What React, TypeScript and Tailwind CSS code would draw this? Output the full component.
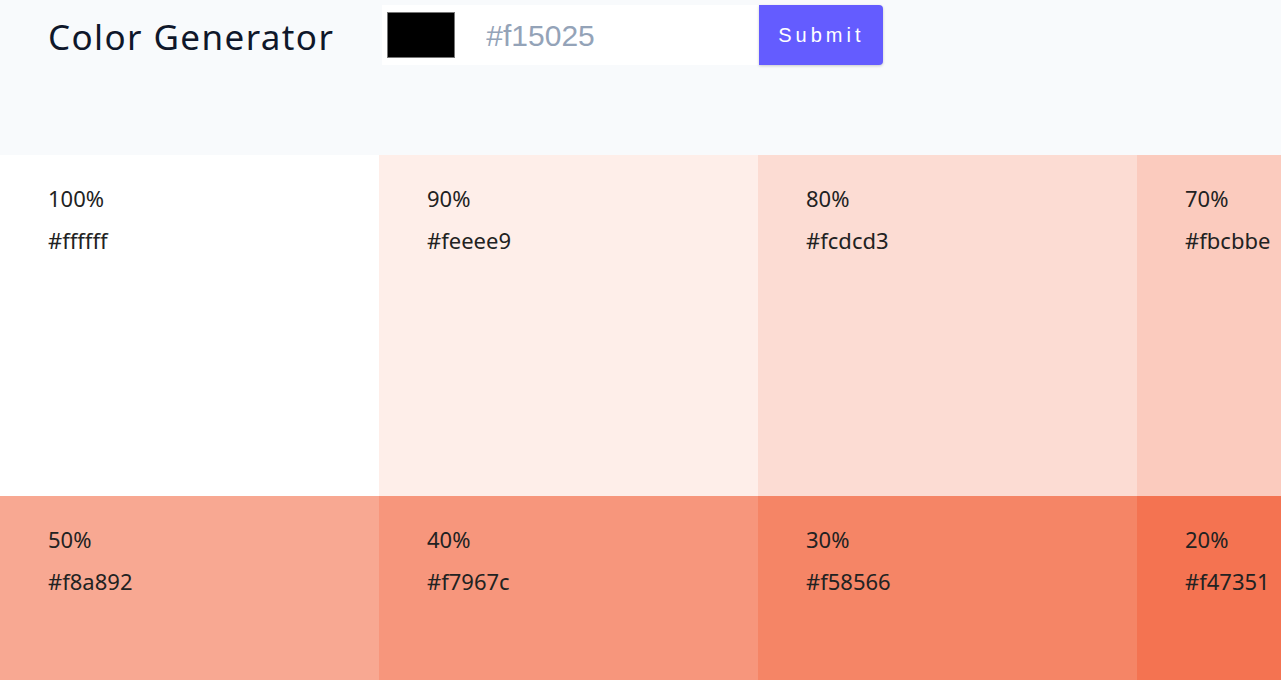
const colors = [
  { weight: 100, hex: 'ffffff' },
  { weight: 90, hex: 'feeee9' },
  { weight: 80, hex: 'fcdcd3' },
  { weight: 70, hex: 'fbcbbe' },
  { weight: 60, hex: 'f9b9a8' },
  { weight: 50, hex: 'f8a892' },
  { weight: 40, hex: 'f7967c' },
  { weight: 30, hex: 'f58566' },
  { weight: 20, hex: 'f47351' },
  { weight: 10, hex: 'f2623b' },
]

function SingleColor({ weight, hex }: { weight: number; hex: string }) {
  return (
    <article className="h-[341px] px-12 pt-[29px]" style={{ backgroundColor: `#${hex}` }}>
      <p className="text-[22px] leading-[28px] text-[#222]">{weight}%</p>
      <p className="mt-[14px] text-[22px] leading-[28px] text-[#222]">#{hex}</p>
    </article>
  )
}

export default function App() {
  return (
    <main className="min-h-screen overflow-hidden bg-[#f8fafc] font-['Noto_Sans',sans-serif]">
      <section className="flex h-[155px] items-start gap-12 pl-12 pt-[5px]">
        <h3 className="mt-[8px] text-[35px] leading-[48px] tracking-[0.04em] text-[#0f172a]">Color Generator</h3>
        <form className="flex h-[60px] items-stretch" onSubmit={(e) => e.preventDefault()}>
          <div className="flex w-[77px] items-center justify-center bg-white">
            <div className="h-[46px] w-[68px] border border-[#767676] bg-black" />
          </div>
          <input
            type="text"
            placeholder="#f15025"
            className="w-[300px] bg-white pl-[27px] font-['Liberation_Sans',Arial,sans-serif] text-[30px] text-[#334155] outline-none placeholder:text-[#94a3b8]"
          />
          <button
            type="submit"
            className="w-[124px] rounded-r-[4px] bg-[#645cff] font-['Liberation_Sans',Arial,sans-serif] text-[20px] tracking-[0.2em] text-white shadow-[0_1px_3px_rgba(0,0,0,0.2)]"
          >
            Submit
          </button>
        </form>
      </section>
      <section className="grid grid-cols-[repeat(5,379px)]">
        {colors.map((c) => (
          <SingleColor key={c.weight} weight={c.weight} hex={c.hex} />
        ))}
      </section>
    </main>
  )
}
